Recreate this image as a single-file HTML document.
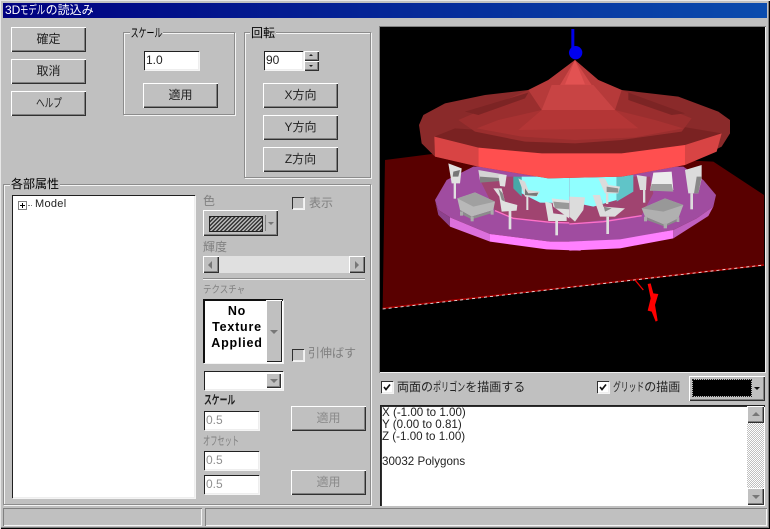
<!DOCTYPE html>
<html lang="ja"><head><meta charset="utf-8"><title>3Dモデルの読込み</title>
<style>
html,body{margin:0;padding:0;background:#c0c0c0}
#w{position:relative;width:770px;height:529px;overflow:hidden;background:#c0c0c0;font:12px/14px "Liberation Sans","Noto Sans CJK JP",sans-serif;color:#000;filter:blur(.3px)}
#w div{position:absolute;box-sizing:border-box}
.b{background:#c0c0c0;box-shadow:inset 1px 1px #fff,inset -1px -1px #303030,inset -2px -2px #808080;text-align:center;line-height:25px;color:#222}
.g{color:#808080}
.gb{border:1px solid #8c8c8c;box-shadow:1px 1px #f4f4f4,inset 1px 1px #f4f4f4}
.l{background:#c0c0c0;white-space:nowrap;padding:0 1px;height:14px}
.t{white-space:nowrap;height:14px}
.e{background:#fff;box-shadow:inset 1px 1px #202020,inset -1px -1px #eee,1px 1px #f4f4f4;line-height:19px;padding-left:2px;font-size:12px;color:#222}
.c{width:12px;height:12px;background:#fff;box-shadow:inset 1px 1px #303030,inset -1px -1px #eee,1px 1px #f4f4f4}
.cd{background:#c0c0c0}
.a{width:0;height:0;border-left:4px solid transparent;border-right:4px solid transparent}
.dn{border-top:4px solid #777}
.up{border-bottom:4px solid #777}
.h{display:inline-block;transform-origin:0 50%}
</style></head><body><div id="w">
<div style="left:0;top:0;width:770px;height:529px;box-shadow:inset 1px 1px #e8e8e8,inset -1px -1px #000,inset -2px -2px #808080"></div>
<div style="left:3px;top:3px;width:764px;height:15px;background:linear-gradient(90deg,#000080,#0a4cae);color:#fff;padding-left:2px;line-height:15px;white-space:nowrap;font-size:12px">3D<span class="h" style="transform:scaleX(.7);margin-right:-10.8px">モデル</span>の読込み</div>

<div class="b" style="left:11px;top:27px;width:75px;height:25px">確定</div>
<div class="b" style="left:11px;top:59px;width:75px;height:25px">取消</div>
<div class="b" style="left:11px;top:91px;width:75px;height:25px"></div>
<div class="t" style="left:36px;top:96px;color:#222;transform:scaleX(.72);transform-origin:0 0">ヘルプ</div>

<div class="gb" style="left:123px;top:32px;width:112px;height:83px"></div>
<div class="l" style="left:130px;top:26px;transform:scaleX(.66);transform-origin:0 0">スケール</div>
<div class="e" style="left:144px;top:51px;width:55px;height:19px">1.0</div>
<div class="b" style="left:143px;top:83px;width:75px;height:25px">適用</div>

<div class="gb" style="left:244px;top:32px;width:127px;height:146px"></div>
<div class="l" style="left:250px;top:26px">回転</div>
<div class="e" style="left:264px;top:51px;width:39px;height:19px">90</div>
<div class="b" style="left:304px;top:51px;width:15px;height:10px"></div>
<div class="a up" style="left:309px;top:54px;border-bottom-color:#222;border-left-width:2px;border-right-width:2px;border-bottom-width:2px"></div>
<div class="b" style="left:304px;top:61px;width:15px;height:10px"></div>
<div class="a dn" style="left:309px;top:65px;border-top-color:#222;border-left-width:2px;border-right-width:2px;border-top-width:2px"></div>
<div class="b" style="left:263px;top:83px;width:75px;height:25px">X方向</div>
<div class="b" style="left:263px;top:115px;width:75px;height:25px">Y方向</div>
<div class="b" style="left:263px;top:147px;width:75px;height:25px">Z方向</div>

<div class="gb" style="left:3px;top:184px;width:368px;height:321px"></div>
<div class="l" style="left:10px;top:177px">各部属性</div>
<div style="left:12px;top:195px;width:183px;height:303px;background:#fff;box-shadow:inset 1px 1px #202020,inset -1px -1px #eee,1px 1px #f4f4f4"></div>
<div style="left:18px;top:201px;width:9px;height:9px;border:1px solid #808080;background:#fff"></div>
<div style="left:20px;top:205px;width:5px;height:1px;background:#000"></div>
<div style="left:22px;top:203px;width:1px;height:5px;background:#000"></div>
<div style="left:28px;top:205px;width:4px;height:1px;border-top:1px dotted #808080"></div>
<div class="t" style="left:35px;top:197px;font-size:11px;letter-spacing:.3px;color:#222">Model</div>

<div class="t g" style="left:203px;top:194px">色</div>
<div class="b" style="left:203px;top:210px;width:75px;height:26px"></div>
<div style="left:209px;top:216px;width:54px;height:16px;border:1px solid #222;background:repeating-linear-gradient(135deg,#333 0 1.4px,#bbb 1.4px 2.8px)"></div>
<div style="left:265px;top:215px;width:1px;height:16px;background:#808080"></div>
<div class="a dn" style="left:268px;top:222px;border-left-width:3px;border-right-width:3px;border-top-width:3px"></div>
<div class="c cd" style="left:292px;top:197px"></div>
<div class="t g" style="left:309px;top:196px">表示</div>

<div class="t g" style="left:203px;top:240px">輝度</div>
<div style="left:203px;top:256px;width:162px;height:17px;background:#e0e0e0"></div>
<div class="b" style="left:203px;top:256px;width:16px;height:17px"></div>
<div style="left:208px;top:261px;width:0;height:0;border-top:4px solid transparent;border-bottom:4px solid transparent;border-right:4px solid #777"></div>
<div class="b" style="left:349px;top:256px;width:16px;height:17px"></div>
<div style="left:355px;top:261px;width:0;height:0;border-top:4px solid transparent;border-bottom:4px solid transparent;border-left:4px solid #777"></div>
<div style="left:203px;top:278px;width:162px;height:1px;background:#8c8c8c"></div>
<div style="left:203px;top:279px;width:162px;height:1px;background:#f0f0f0"></div>

<div class="t g" style="left:203px;top:284px;font-size:10px;transform:scaleX(.85);transform-origin:0 0">テクスチャ</div>
<div style="left:203px;top:299px;width:80px;height:64px;background:#fff;box-shadow:inset 1px 1px #101010,inset 2px 2px #101010,1px 1px #f4f4f4"></div>
<div style="left:266px;top:300px;width:16px;height:62px;background:#c0c0c0;box-shadow:inset 1px 1px #fff,inset -1px -1px #202020"></div>
<div class="a dn" style="left:270px;top:330px"></div>
<div style="left:207px;top:303px;width:60px;text-align:center;font-weight:bold;font-size:12.5px;line-height:16px;letter-spacing:.8px;color:#000">No<br>Texture<br>Applied</div>
<div class="c cd" style="left:292px;top:349px"></div>
<div class="t g" style="left:308px;top:346px">引伸ばす</div>

<div class="e" style="left:204px;top:371px;width:79px;height:19px"></div>
<div class="b" style="left:266px;top:373px;width:15px;height:15px"></div>
<div class="a dn" style="left:270px;top:379px"></div>
<div class="t" style="left:204px;top:393px;transform:scaleX(.65);transform-origin:0 0;font-weight:bold;color:#222">スケール</div>
<div class="e" style="left:204px;top:411px;width:55px;height:19px;color:#909090">0.5</div>
<div class="b" style="left:291px;top:406px;width:75px;height:25px;color:#8a8a8a">適用</div>
<div class="t g" style="left:203px;top:434px;transform:scaleX(.6);transform-origin:0 0">オフセット</div>
<div class="e" style="left:204px;top:451px;width:55px;height:19px;color:#909090">0.5</div>
<div class="e" style="left:204px;top:475px;width:55px;height:19px;color:#909090">0.5</div>
<div class="b" style="left:291px;top:470px;width:75px;height:25px;color:#8a8a8a">適用</div>

<div style="left:380px;top:27px;width:385px;height:345px;background:#000;overflow:hidden">
<svg width="770" height="529" viewBox="0 0 770 529" style="position:absolute;left:-380px;top:-27px">
<g transform="translate(380 150) scale(.33333)">
<polygon points="15,30 250,0 1000,35 1152,135 1152,345 8,475" fill="#590000"/>
<polyline points="8,475 1152,345" stroke="#a80000" stroke-width="5" fill="none"/>
<polyline points="8,477 1152,345" stroke="#eee" stroke-width="2.5" stroke-dasharray="9 9" fill="none"/>
<polyline points="765,390 790,420" stroke="#e00" stroke-width="4" fill="none"/>
<polygon points="803,402 812,400 820,430 835,432 825,465 833,512 827,515 815,485 803,482 812,445" fill="#f00"/>
</g>
<g transform="translate(430 160) scale(.33333)">
<polygon points="15,120 50,60 130,20 452,20 452,245 360,245 180,222 60,172 25,150" fill="#a04ca0"/>
<polygon points="60,172 180,222 180,245 60,200" fill="#dc70dc"/>
<polygon points="180,222 360,245 452,245 452,272 350,268 180,245" fill="#ff80ff"/>
<polygon points="15,120 25,150 60,172 60,200 25,165" fill="#8c428c"/>
<polygon points="150,60 230,50 452,50 452,190 360,187 250,175 195,152 170,100" fill="#a04470"/>
<polyline points="195,152 250,175 360,187 452,190" stroke="#ff70c8" stroke-width="4" fill="none"/>
<polygon points="250,50 275,50 275,110 250,85" fill="#48a8a8"/>
<polygon points="275,50 452,50 452,130 330,128 275,100" fill="#90ffff"/>
<polygon points="82,115 135,97 195,125 190,150 125,170 90,150" fill="#b8b8b8"/>
<polygon points="82,115 135,97 195,125 130,140" fill="#a0a0a0"/>
<polygon points="90,150 125,170 190,150 190,158 125,178 90,160" fill="#8c8c8c"/>
<rect x="90" y="155" width="9" height="12" fill="#aaa"/><rect x="122" y="170" width="9" height="14" fill="#aaa"/><rect x="182" y="150" width="9" height="14" fill="#aaa"/>
<polygon points="145,30 230,45 225,62 150,62" fill="#d4d4d4"/><polygon points="150,50 225,55 225,62 150,68" fill="#808080"/>
<g fill="#e0e0e0">
<polygon points="55,10 95,25 90,70 65,70"/>
<rect x="71" y="68" width="7" height="48"/>
<rect x="236" y="150" width="8" height="58"/>
<polygon points="190,85 215,85 225,125 262,135 260,152 215,155 208,110"/>
<polygon points="205,45 230,45 225,80 210,78"/>
<polygon points="265,55 285,65 295,90 330,95 320,110 285,110" fill="#d8d8d8"/>
<rect x="289" y="108" width="6" height="42"/>
<polygon points="365,115 452,125 452,170 430,185 370,140"/>
<polygon points="345,125 365,130 370,160 410,165 410,183 355,183"/>
<rect x="376" y="183" width="8" height="43"/>
</g>
<polygon points="70,35 90,30 85,50 68,50" fill="#777"/>
<polygon points="370,125 452,132 452,150 375,145" fill="#999"/>
<polygon points="205,85 218,100 225,125 215,120" fill="#888"/>
<polygon points="285,85 295,100 325,98 320,108 285,105" fill="#777"/>
</g>
<g transform="translate(570 160) scale(.33333)">
<polygon points="-2,20 340,20 400,60 438,105 430,140 380,175 310,210 150,240 -2,245" fill="#a04ca0"/>
<polygon points="-2,245 150,238 310,210 310,235 150,265 -2,272" fill="#ff80ff"/>
<polygon points="310,210 380,175 430,140 415,168 310,235" fill="#c060c0"/>
<polygon points="-2,50 240,50 250,100 215,165 100,180 -2,192" fill="#a04470"/>
<polyline points="-2,192 100,185 215,167" stroke="#ff70c8" stroke-width="4" fill="none"/>
<polygon points="-2,50 140,50 140,120 70,140 -2,125" fill="#90ffff"/>
<polygon points="140,50 190,45 190,95 140,125" fill="#60c4c8"/>
<polygon points="215,145 285,115 340,135 325,175 285,195 225,170" fill="#b0b0b0"/>
<polygon points="215,145 285,115 340,135 280,155" fill="#989898"/>
<polygon points="225,170 285,195 325,175 325,182 285,200 225,178" fill="#8a8a8a"/>
<rect x="222" y="170" width="9" height="14" fill="#aaa"/><rect x="281" y="190" width="10" height="15" fill="#aaa"/><rect x="320" y="172" width="8" height="14" fill="#aaa"/>
<polygon points="250,38 305,35 310,90 240,92" fill="#ececec"/>
<polygon points="245,72 305,72 310,95 240,92" fill="#a0a0a0"/>
<g fill="#dcdcdc">
<polygon points="-2,110 45,112 40,150 15,185 -2,170"/>
<polygon points="68,105 90,105 100,140 165,145 135,170 90,170"/>
<rect x="109" y="170" width="8" height="52"/>
<polygon points="85,55 105,55 115,75 150,80 145,100 105,100"/>
<rect x="108" y="100" width="7" height="32"/>
<polygon points="200,45 230,50 228,90 210,90"/>
<rect x="219" y="90" width="7" height="38"/>
<polygon points="345,30 395,15 395,55 385,100 355,100"/>
<rect x="361" y="100" width="8" height="48"/>
</g>
<polygon points="95,115 100,140 125,145 105,155" fill="#888"/>
<polygon points="380,50 395,50 385,100 372,100" fill="#888"/>
<polygon points="110,80 145,85 145,98 110,96" fill="#909090"/>
</g>
<g transform="translate(415 50) scale(.33333)">
<polygon points="12,225 25,195 90,160 210,135 340,120 400,90 480,30 550,90 620,120 790,140 910,185 945,210 945,250 920,290 810,345 620,380 400,385 190,350 60,320 20,280" fill="#8a2a2a"/>
<polygon points="58,260 120,235 480,260 800,230 920,250 810,285 620,310 380,310 190,293" fill="#7a2222"/>
<polygon points="58,260 190,293 190,350 60,320" fill="#d84444"/>
<polygon points="190,293 380,310 620,310 810,285 810,345 620,380 400,385 190,350" fill="#ff4f4f"/>
<polygon points="810,285 920,250 905,305 810,345" fill="#d84444"/>
<polygon points="130,210 340,120 620,120 830,205 800,245 620,270 480,280 330,275 180,245" fill="#9a2e2e"/>
<polygon points="150,185 340,128 330,145 190,195" fill="#7c2424"/>
<polygon points="640,128 810,190 770,195 640,150" fill="#7c2424"/>
<polygon points="185,235 250,210 380,180 600,180 720,210 805,235 660,262 480,270 320,260" fill="#a83232"/>
<polygon points="310,240 380,180 600,180 670,235" fill="#b43636"/>
<polygon points="340,120 400,90 480,30 550,90 620,120 600,180 380,180" fill="#b63a3a"/>
<polygon points="380,180 410,105 535,105 600,180" fill="#c84444"/>
<polygon points="480,30 435,105 530,105" fill="#d24848"/>
<polygon points="480,30 450,103 510,103" fill="#e25252"/>
</g>
<g transform="translate(380 20) scale(.33333)">
<rect x="574" y="27" width="9" height="60" fill="#0000e8"/>
<circle cx="587" cy="98" r="20" fill="#0000f0"/>
</g>
</svg>
</div>
<div style="left:379px;top:26px;width:387px;height:347px;box-shadow:inset 1px 1px #808080,inset -1px -1px #eee"></div>

<div class="c" style="left:381px;top:381px"></div>
<svg width="12" height="12" style="position:absolute;left:381px;top:381px"><path d="M3 6l2 2.5 4-5" stroke="#111" stroke-width="1.7" fill="none"/></svg>
<div class="t" style="left:397px;top:380px;color:#222">両面の<span class="h" style="transform:scaleX(.67);margin-right:-15.8px">ポリゴン</span>を描画する</div>
<div class="c" style="left:597px;top:381px"></div>
<svg width="12" height="12" style="position:absolute;left:597px;top:381px"><path d="M3 6l2 2.5 4-5" stroke="#111" stroke-width="1.7" fill="none"/></svg>
<div class="t" style="left:613px;top:380px;color:#222"><span class="h" style="transform:scaleX(.65);margin-right:-16.8px">グリッド</span>の描画</div>
<div class="b" style="left:689px;top:376px;width:76px;height:25px"></div>
<div style="left:693px;top:380px;width:58px;height:16px;background:#000;outline:1px dotted #222"></div>
<div class="a dn" style="left:754px;top:387px;border-top-color:#111;border-left-width:3px;border-right-width:3px;border-top-width:3px"></div>

<div style="left:380px;top:405px;width:385px;height:101px;background:#fff;box-shadow:inset 1px 1px #202020,inset 2px 2px #303030"></div>
<div style="left:382px;top:407px;font-size:11.6px;line-height:12.2px;white-space:nowrap;color:#222">X (-1.00 to 1.00)<br>Y (0.00 to 0.81)<br>Z (-1.00 to 1.00)<br><br>30032 Polygons</div>
<div style="left:747px;top:406px;width:17px;height:99px;background:repeating-conic-gradient(#fff 0 25%,#c0c0c0 0 50%) 0 0/2px 2px"></div>
<div class="b" style="left:747px;top:406px;width:17px;height:17px"></div>
<div class="a up" style="left:752px;top:412px"></div>
<div class="b" style="left:747px;top:488px;width:17px;height:17px"></div>
<div class="a dn" style="left:752px;top:495px"></div>

<div style="left:3px;top:508px;width:199px;height:18px;box-shadow:inset 1px 1px #808080,inset -1px -1px #f4f4f4"></div>
<div style="left:205px;top:508px;width:562px;height:18px;box-shadow:inset 1px 1px #808080,inset -1px -1px #f4f4f4"></div>
</div></body></html>
